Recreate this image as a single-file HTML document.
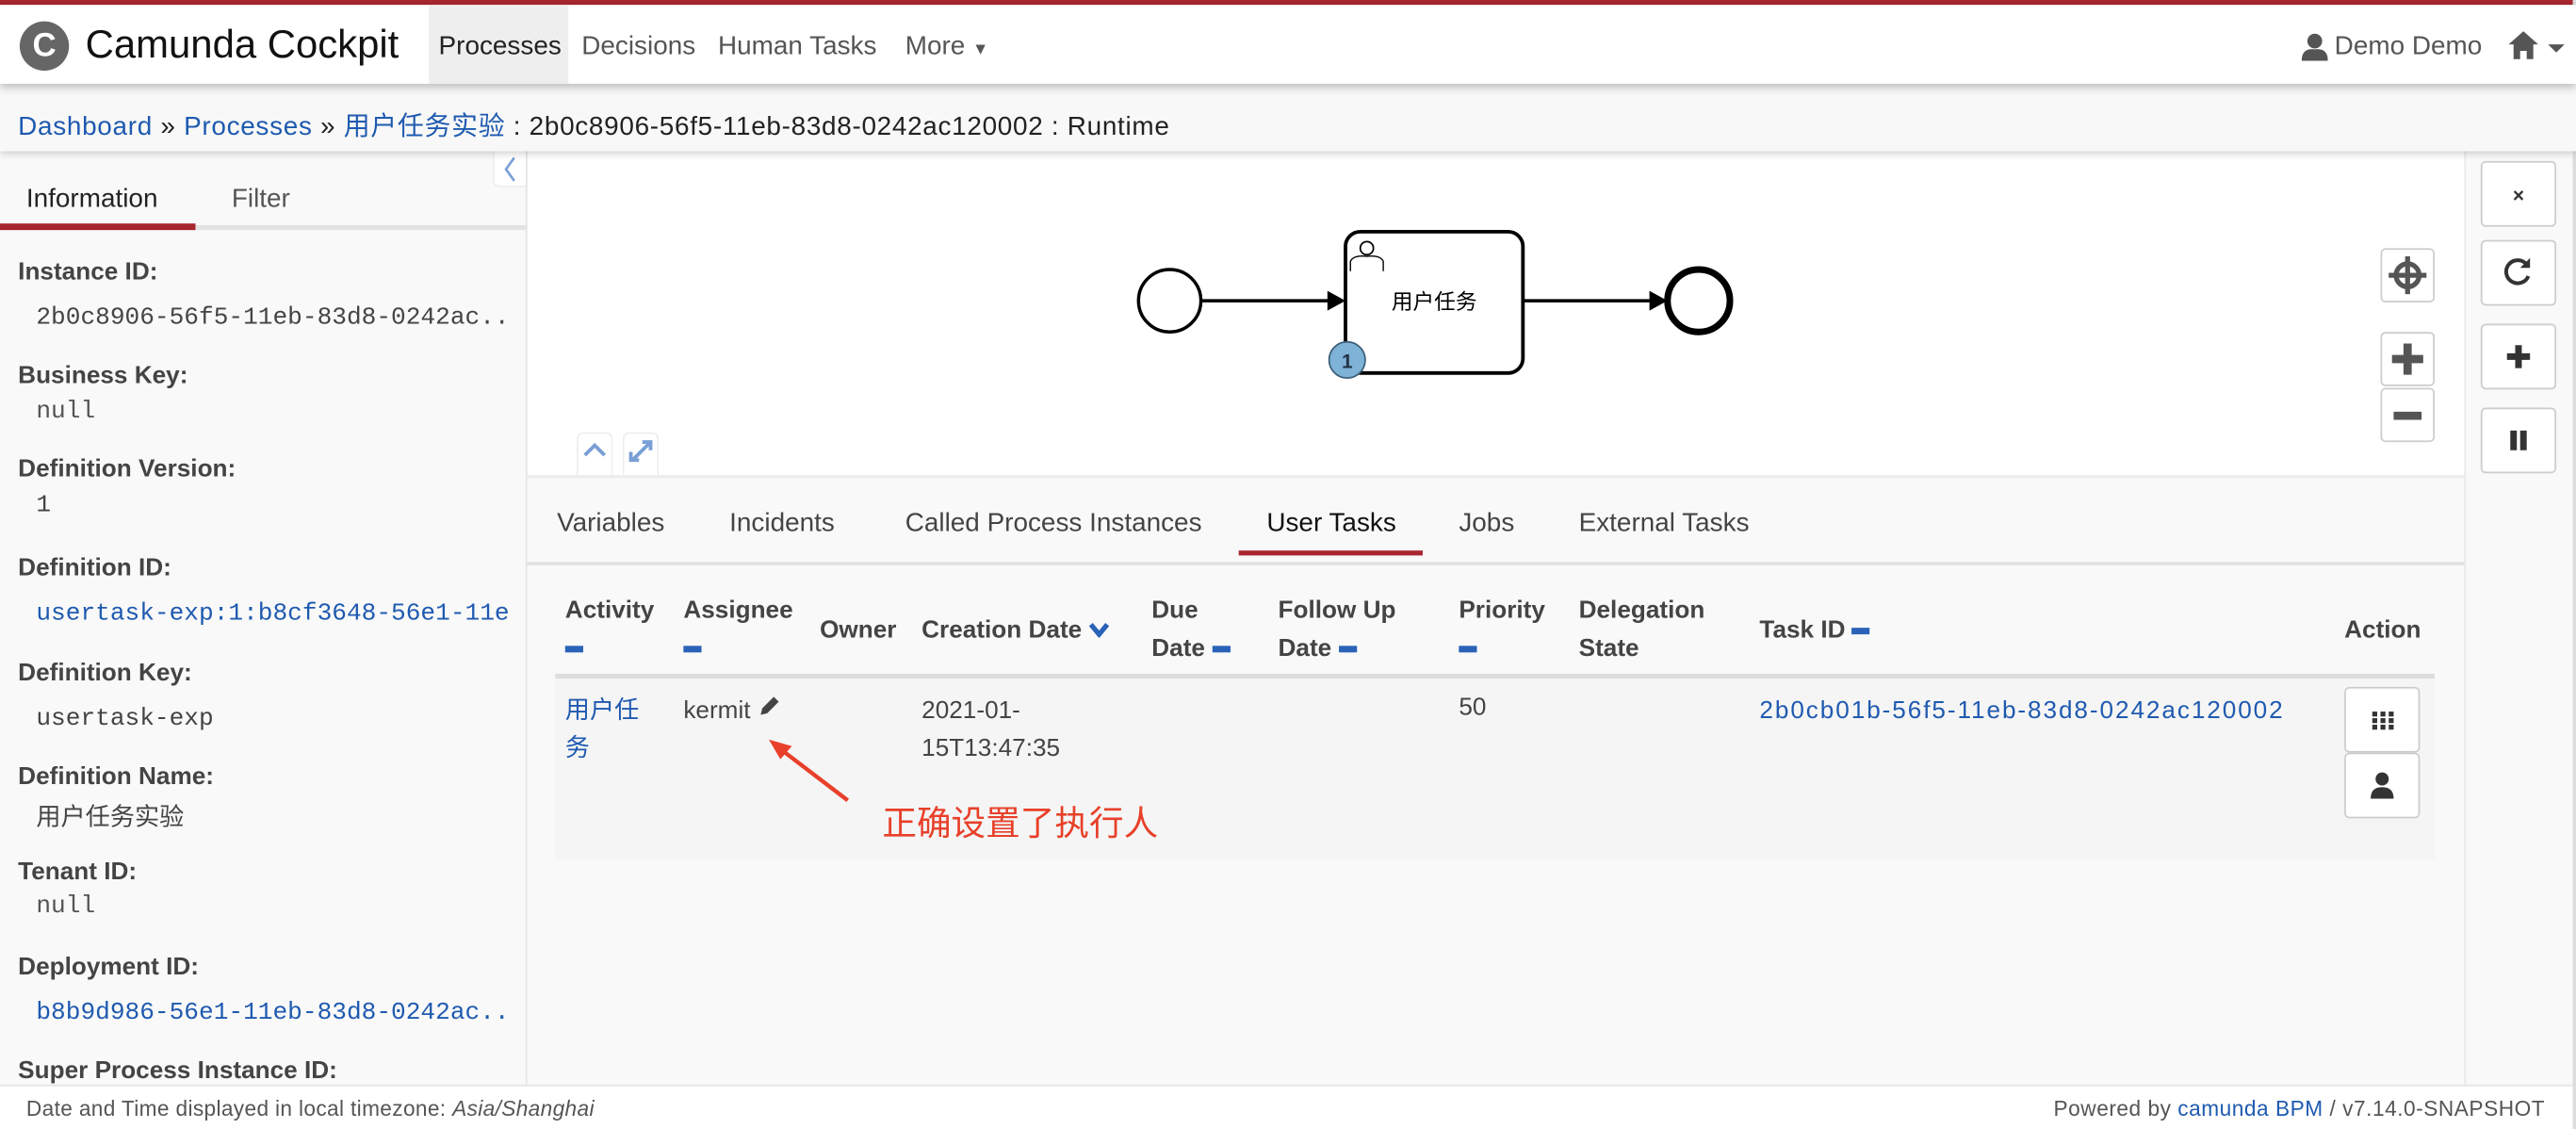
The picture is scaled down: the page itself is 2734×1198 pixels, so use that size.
<!DOCTYPE html>
<html><head><meta charset="utf-8"><style>
*{box-sizing:border-box;margin:0;padding:0}
html,body{width:2734px;height:1198px;overflow:hidden;background:#fff}
#w{position:absolute;left:0;top:0;width:1568px;height:687px;transform:scale(1.74362,1.74381);transform-origin:0 0;font-family:"Liberation Sans","Noto Sans CJK SC",sans-serif;color:#333;background:#fff}
.a{position:absolute;white-space:nowrap}
.blue{color:#1f5ab0}
.lbl{font-weight:bold;font-size:15px;color:#444}
.val{font-family:"Liberation Mono","Noto Sans CJK SC",monospace;font-size:15px;color:#444;overflow:hidden;width:288px}
.btn{position:absolute;border:1px solid #ccc;border-radius:3px;background:#fff}
.th{position:absolute;font-weight:bold;font-size:15px;color:#444;line-height:23px}
.sq{display:inline-block;width:11px;height:4px;background:#2a62b8;vertical-align:middle}
</style></head><body><div id="w">
<div class="a" style="left:0;top:0;width:1568px;height:3px;background:#a8262f"></div>
<div class="a" style="left:0;top:3px;width:1568px;height:48px;background:#fff;box-shadow:0 2px 5px rgba(0,0,0,.25);z-index:2"></div>
<div class="a" style="z-index:3;left:12px;top:13px;width:30px;height:30px;border-radius:50%;background:#666;color:#fff;font-weight:bold;font-size:20px;text-align:center;line-height:30px">C</div>
<div class="a" style="z-index:3;left:52px;top:14px;font-size:24px;color:#111">Camunda Cockpit</div>
<div class="a" style="z-index:3;left:261px;top:3px;width:85px;height:48px;background:#eee"></div>
<div class="a" style="z-index:3;left:267px;top:20px;font-size:16px;color:#222">Processes</div>
<div class="a" style="z-index:3;left:354px;top:20px;font-size:16px;color:#555">Decisions</div>
<div class="a" style="z-index:3;left:437px;top:20px;font-size:16px;color:#555">Human Tasks</div>
<div class="a" style="z-index:3;left:551px;top:20px;font-size:16px;color:#555">More <span style="font-size:10px">▼</span></div>
<svg class="a" style="z-index:3;left:1401px;top:20px" width="16" height="17" viewBox="0 0 16 17"><circle cx="8" cy="5" r="4.5" fill="#555"/><path d="M0 17 Q0 9 8 10 Q16 9 16 17Z" fill="#555"/></svg>
<div class="a" style="z-index:3;left:1421px;top:20px;font-size:16px;color:#555">Demo Demo</div>
<svg class="a" style="z-index:3;left:1527px;top:19px" width="34" height="18" viewBox="0 0 34 18"><path d="M9 0 L18 8 H15 V17 H11 V12 H7 V17 H3 V8 H0Z" fill="#555"/><path d="M24 8 H34 L29 13Z" fill="#555"/></svg>
<div class="a" style="left:0;top:51px;width:1568px;height:41px;background:#f8f8f8;box-shadow:0 2px 4px rgba(0,0,0,.15);z-index:1"></div>
<div class="a" style="z-index:2;left:11px;top:63px;font-size:16px;color:#222;letter-spacing:.4px"><span class="blue">Dashboard</span> » <span class="blue">Processes</span> » <span class="blue">用户任务实验</span> : 2b0c8906-56f5-11eb-83d8-0242ac120002 : Runtime</div>
<!-- sidebar -->
<div class="a" style="left:0;top:92px;width:321px;height:569px;background:#f9f9f9;border-right:1px solid #e4e4e4"></div>
<div class="a" style="left:300px;top:92px;width:20px;height:22px;background:#fff;border:1px solid #eee;border-top:0;border-right:0;border-radius:0 0 0 4px"><svg width="19" height="21" viewBox="0 0 19 21"><path d="M12 4 L7 11 L12 18" stroke="#7a9fd6" stroke-width="1.5" fill="none"/></svg></div>
<div class="a" style="left:16px;top:113px;font-size:16px;color:#222">Information</div>
<div class="a" style="left:141px;top:113px;font-size:16px;color:#555">Filter</div>
<div class="a" style="left:0;top:137px;width:320px;height:3px;background:#e2e2e2"></div>
<div class="a" style="left:0;top:136px;width:119px;height:4px;background:#a8262f"></div>
<div class="a lbl" style="left:11px;top:157px">Instance ID:</div>
<div class="a val" style="left:22px;top:185px">2b0c8906-56f5-11eb-83d8-0242ac...</div>
<div class="a lbl" style="left:11px;top:220px">Business Key:</div>
<div class="a val" style="left:22px;top:242px;color:#555">null</div>
<div class="a lbl" style="left:11px;top:277px">Definition Version:</div>
<div class="a val" style="left:22px;top:299px">1</div>
<div class="a lbl" style="left:11px;top:337px">Definition ID:</div>
<div class="a val" style="left:22px;top:365px;color:#1f5ab0">usertask-exp:1:b8cf3648-56e1-11e...</div>
<div class="a lbl" style="left:11px;top:401px">Definition Key:</div>
<div class="a val" style="left:22px;top:429px">usertask-exp</div>
<div class="a lbl" style="left:11px;top:464px">Definition Name:</div>
<div class="a val" style="left:22px;top:486px">用户任务实验</div>
<div class="a lbl" style="left:11px;top:522px">Tenant ID:</div>
<div class="a val" style="left:22px;top:543px;color:#555">null</div>
<div class="a lbl" style="left:11px;top:580px">Deployment ID:</div>
<div class="a val" style="left:22px;top:608px;color:#1f5ab0">b8b9d986-56e1-11eb-83d8-0242ac...</div>
<div class="a lbl" style="left:11px;top:643px">Super Process Instance ID:</div>
<!-- diagram -->
<svg class="a" style="left:321px;top:93px" width="1179" height="196" viewBox="321 93 1179 196">
<circle cx="712" cy="183" r="19" fill="#fff" stroke="#000" stroke-width="2"/>
<line x1="731" y1="183" x2="810" y2="183" stroke="#000" stroke-width="2"/>
<path d="M808 177 L819 183 L808 189Z" fill="#000"/>
<rect x="819" y="141" width="108" height="86" rx="9" fill="#fff" stroke="#000" stroke-width="2.2"/>
<circle cx="832" cy="151" r="4" fill="#fff" stroke="#000"/><path d="M822 165 V159 Q824 155 832 156 Q840 155 842 159 V165" fill="#fff" stroke="#000" stroke-width=".8"/>
<text x="873" y="188" font-size="13" text-anchor="middle" font-family="Noto Sans CJK SC,sans-serif">用户任务</text>
<line x1="927" y1="183" x2="1006" y2="183" stroke="#000" stroke-width="2"/>
<path d="M1004 177 L1015 183 L1004 189Z" fill="#000"/>
<circle cx="1034" cy="183" r="19" fill="#fff" stroke="#000" stroke-width="4"/>
<circle cx="820" cy="219" r="11" fill="#7eb2d6" stroke="#3c5f7a" stroke-width="1"/>
<text x="820" y="224" font-size="12" font-weight="bold" text-anchor="middle" fill="#234" font-family="Liberation Sans">1</text>
</svg>
<div class="a" style="left:351px;top:263px;width:22px;height:26px;border:1px solid #eee;border-bottom:0;border-radius:4px 4px 0 0;background:#fff"><svg width="20" height="20" viewBox="0 0 20 20"><path d="M4 13 L10 7 L16 13" stroke="#7a9fd6" stroke-width="2.2" fill="none"/></svg></div>
<div class="a" style="left:379px;top:263px;width:22px;height:26px;border:1px solid #eee;border-bottom:0;border-radius:4px 4px 0 0;background:#fff"><svg width="20" height="20" viewBox="0 0 20 20"><path d="M5 16 L15 6 M11 5 H16 V10 M4 11 V16 H9" stroke="#7a9fd6" stroke-width="2.2" fill="none"/></svg></div>
<div class="btn" style="left:1449px;top:151px;width:33px;height:33px"><svg width="31" height="31" viewBox="0 0 31 31"><circle cx="15.5" cy="15.5" r="7" fill="none" stroke="#555" stroke-width="3"/><path d="M15.5 4 V27 M4 15.5 H27" stroke="#555" stroke-width="3"/></svg></div>
<div class="btn" style="left:1449px;top:202px;width:33px;height:33px"><svg width="31" height="31" viewBox="0 0 31 31"><path d="M15.5 6 V25 M6 15.5 H25" stroke="#555" stroke-width="5"/></svg></div>
<div class="btn" style="left:1449px;top:236px;width:33px;height:33px"><svg width="31" height="31" viewBox="0 0 31 31"><path d="M7 16 H24" stroke="#555" stroke-width="5"/></svg></div>
<!-- right toolbar -->
<div class="a" style="left:1500px;top:92px;width:66px;height:569px;background:#f9f9f9;border-left:1px solid #e8e8e8"></div>
<div class="a" style="left:1566px;top:0;width:2px;height:687px;background:#ddd"></div>
<div class="btn" style="left:1510px;top:98px;width:46px;height:40px;text-align:center;line-height:40px;font-size:12px;font-weight:bold">×</div>
<div class="btn" style="left:1510px;top:146px;width:46px;height:40px"><svg width="44" height="38" viewBox="0 0 44 38"><path d="M27 14 A7 7 0 1 0 28 21" fill="none" stroke="#333" stroke-width="2.3"/><path d="M29 10 V16 H23Z" fill="#333"/></svg></div>
<div class="btn" style="left:1510px;top:197px;width:46px;height:40px"><svg width="44" height="38" viewBox="0 0 44 38"><path d="M22 12 V26 M15 19 H29" stroke="#333" stroke-width="4"/></svg></div>
<div class="btn" style="left:1510px;top:248px;width:46px;height:40px"><svg width="44" height="38" viewBox="0 0 44 38"><path d="M17 13 H21 V25 H17Z M23 13 H27 V25 H23Z" fill="#333"/></svg></div>
<!-- tabs area -->
<div class="a" style="left:321px;top:289px;width:1179px;height:372px;background:#f9f9f9;border-top:2px solid #eee"></div>
<div class="a" style="left:339px;top:310px;font-size:16px;color:#444">Variables</div>
<div class="a" style="left:444px;top:310px;font-size:16px;color:#444">Incidents</div>
<div class="a" style="left:551px;top:310px;font-size:16px;color:#444">Called Process Instances</div>
<div class="a" style="left:771px;top:310px;font-size:16px;color:#111">User Tasks</div>
<div class="a" style="left:888px;top:310px;font-size:16px;color:#444">Jobs</div>
<div class="a" style="left:961px;top:310px;font-size:16px;color:#444">External Tasks</div>
<div class="a" style="left:754px;top:335px;width:112px;height:3px;background:#a8262f"></div>
<div class="a" style="left:321px;top:342px;width:1179px;height:2px;background:#e2e2e2"></div>
<div class="th" style="left:344px;top:360px">Activity<br><span class="sq"></span></div>
<div class="th" style="left:416px;top:360px">Assignee<br><span class="sq"></span></div>
<div class="th" style="left:499px;top:372px">Owner</div>
<div class="th" style="left:561px;top:372px">Creation Date <svg width="12" height="10" viewBox="0 0 12 10"><path d="M1 2 L6 8 L11 2" stroke="#2a62b8" stroke-width="3" fill="none"/></svg></div>
<div class="th" style="left:701px;top:360px">Due<br>Date <span class="sq"></span></div>
<div class="th" style="left:778px;top:360px">Follow Up<br>Date <span class="sq"></span></div>
<div class="th" style="left:888px;top:360px">Priority<br><span class="sq"></span></div>
<div class="th" style="left:961px;top:360px">Delegation<br>State</div>
<div class="th" style="left:1071px;top:372px">Task ID <span class="sq"></span></div>
<div class="th" style="left:1427px;top:372px">Action</div>
<div class="a" style="left:338px;top:410px;width:1144px;height:3px;background:#ddd"></div>
<div class="a" style="left:338px;top:413px;width:1144px;height:110px;background:#f5f5f5"></div>
<div class="a" style="left:344px;top:421px;font-size:15px;line-height:23px;color:#1f5ab0;white-space:normal;width:52px">用户任<br>务</div>
<div class="a" style="left:416px;top:422px;font-size:15px;color:#444">kermit <svg width="15" height="15" viewBox="0 0 15 15"><path d="M2 13 L3 9 L10 2 L13 5 L6 12Z" fill="#444"/></svg></div>
<div class="a" style="left:561px;top:421px;font-size:15px;line-height:23px;color:#444">2021-01-<br>15T13:47:35</div>
<div class="a" style="left:888px;top:422px;font-size:15px;color:#444">50</div>
<div class="a" style="left:1071px;top:424px;font-size:15px;color:#1f5ab0;letter-spacing:1.1px">2b0cb01b-56f5-11eb-83d8-0242ac120002</div>
<div class="btn" style="left:1427px;top:418px;width:46px;height:40px"><svg width="44" height="38" viewBox="0 0 44 38"><g fill="#333"><rect x="16" y="14" width="3" height="3"/><rect x="21" y="14" width="3" height="3"/><rect x="26" y="14" width="3" height="3"/><rect x="16" y="18" width="3" height="3"/><rect x="21" y="18" width="3" height="3"/><rect x="26" y="18" width="3" height="3"/><rect x="16" y="22" width="3" height="3"/><rect x="21" y="22" width="3" height="3"/><rect x="26" y="22" width="3" height="3"/></g></svg></div>
<div class="btn" style="left:1427px;top:458px;width:46px;height:40px"><svg width="44" height="38" viewBox="0 0 44 38"><circle cx="22" cy="15" r="4" fill="#333"/><path d="M15 27 Q15 20 22 20 Q29 20 29 27Z" fill="#333"/></svg></div>
<svg class="a" style="left:460px;top:445px" width="70" height="50" viewBox="0 0 70 50"><line x1="56" y1="42" x2="14" y2="10" stroke="#e8402a" stroke-width="2.5"/><path d="M8 5 L22 9 L15 17Z" fill="#e8402a"/></svg>
<div class="a" style="left:537px;top:485px;font-size:21px;color:#e8402a;font-family:'Noto Sans CJK SC',sans-serif">正确设置了执行人</div>
<!-- footer -->
<div class="a" style="left:0;top:660px;width:1566px;height:27px;background:#fff;border-top:1px solid #e4e4e4"></div>
<div class="a" style="left:16px;top:667px;font-size:13px;color:#555;letter-spacing:.2px">Date and Time displayed in local timezone: <i>Asia/Shanghai</i></div>
<div class="a" style="left:1250px;top:667px;font-size:13px;color:#555;letter-spacing:.3px">Powered by <span class="blue">camunda BPM</span> / v7.14.0-SNAPSHOT</div>
</div></body></html>
